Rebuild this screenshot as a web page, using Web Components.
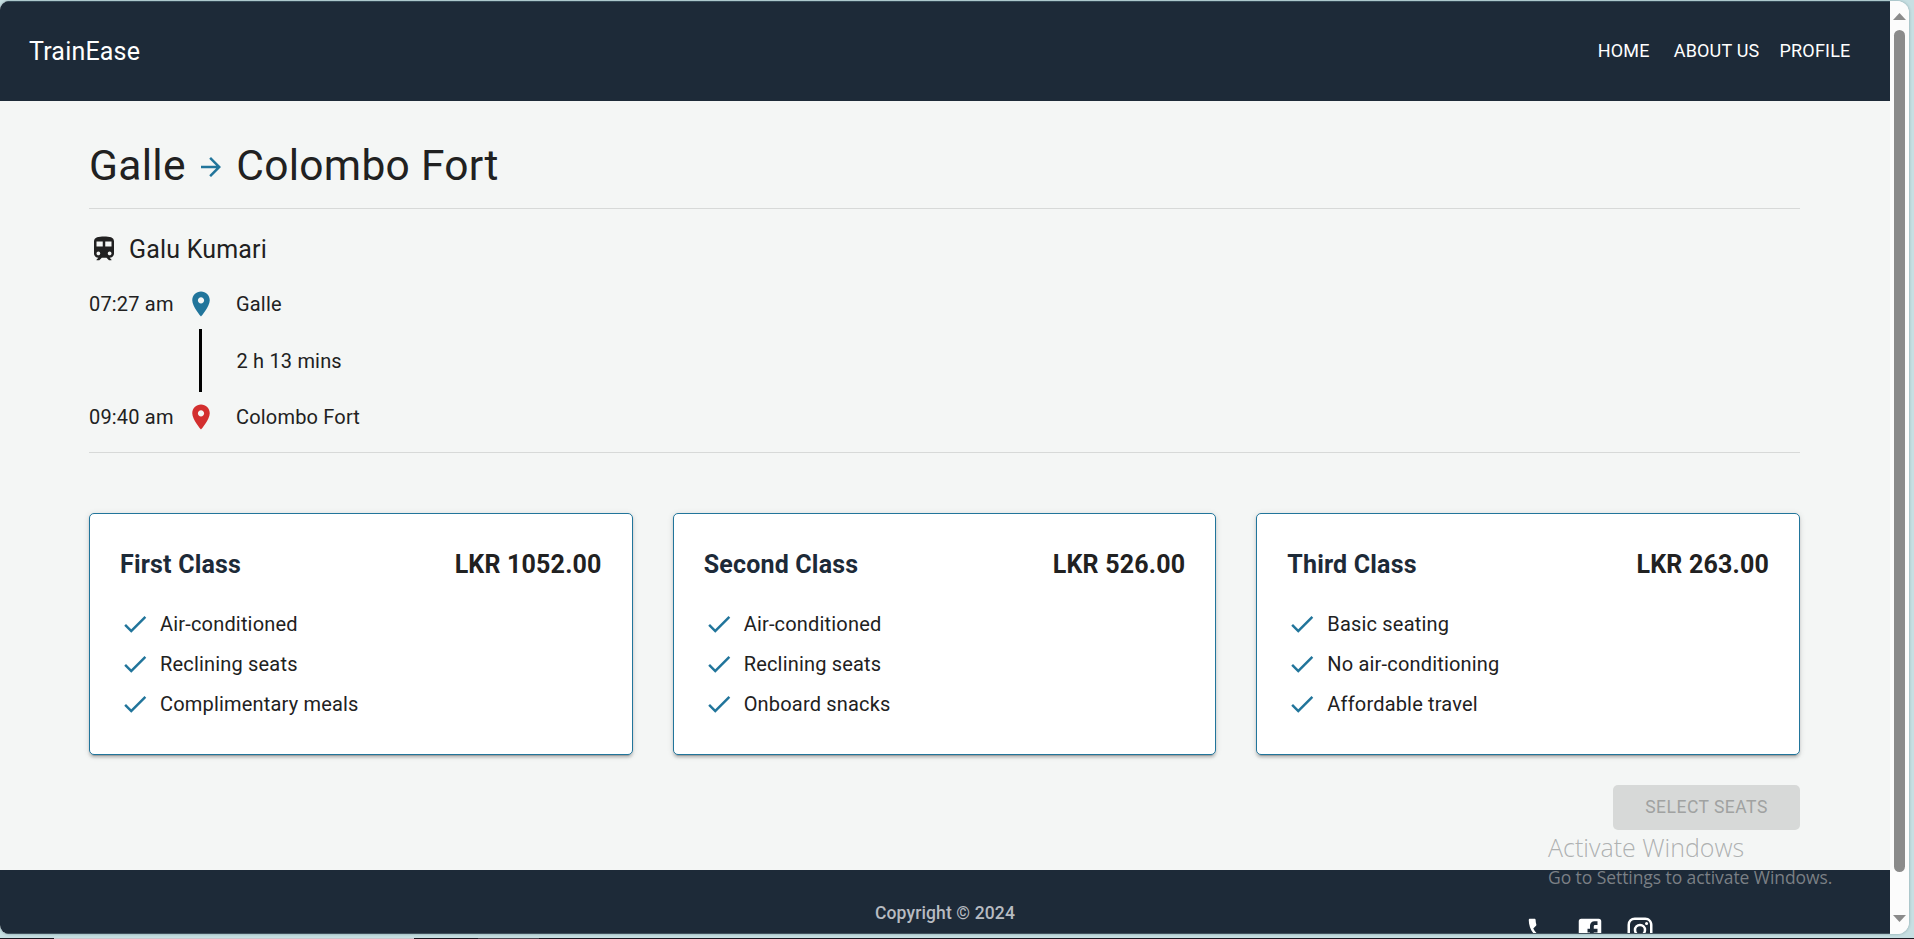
<!DOCTYPE html>
<html lang="en">
<head>
<meta charset="utf-8">
<title>TrainEase</title>
<style>
html,body{margin:0;height:939px;overflow:hidden}
body{background:#c7dfe2;font-family:Roboto,"Liberation Sans",sans-serif;color:#212121;font-size:20px;line-height:30px;letter-spacing:.009em}
</style>
</head>
<body>
<browser-window>
  <site-header slot="page"></site-header>
  <trip-page slot="page">
    <route-title from="Galle" to="Colombo Fort"></route-title>
    <trip-timeline></trip-timeline>
    <class-list>
      <class-card name="First Class" price="LKR 1052.00">
        <class-feature>Air-conditioned</class-feature><class-feature>Reclining seats</class-feature><class-feature>Complimentary meals</class-feature>
      </class-card>
      <class-card name="Second Class" price="LKR 526.00">
        <class-feature>Air-conditioned</class-feature><class-feature>Reclining seats</class-feature><class-feature>Onboard snacks</class-feature>
      </class-card>
      <class-card name="Third Class" price="LKR 263.00">
        <class-feature>Basic seating</class-feature><class-feature>No air-conditioning</class-feature><class-feature>Affordable travel</class-feature>
      </class-card>
    </class-list>
    <action-button>SELECT SEATS</action-button>
  </trip-page>
  <site-footer slot="page"></site-footer>
</browser-window>
<task-edge></task-edge>
<activation-note></activation-note>
<script>
const define = (name, render) => customElements.define(name, class extends HTMLElement {
  constructor() { super(); this.attachShadow({ mode: 'open' }); }
  connectedCallback() { this.shadowRoot.innerHTML = render(this); }
});
const paths = {
  arrow: 'm12 4-1.41 1.41L16.17 11H4v2h12.17l-5.58 5.59L12 20l8-8z',
  train: 'M12 2c-4 0-8 .5-8 4v9.5C4 17.43 5.57 19 7.5 19L6 20.5v.5h2.23l2-2H14l2 2h2v-.5L16.5 19c1.93 0 3.5-1.57 3.5-3.5V6c0-3.5-3.58-4-8-4M7.5 17c-.83 0-1.5-.67-1.5-1.5S6.67 14 7.5 14s1.5.67 1.5 1.5S8.33 17 7.5 17m3.5-7H6V6h5zm2 0V6h5v4zm3.5 7c-.83 0-1.5-.67-1.5-1.5s.67-1.5 1.5-1.5 1.5.67 1.5 1.5-.67 1.5-1.5 1.5',
  pin: 'M12 2C8.13 2 5 5.13 5 9c0 5.25 7 13 7 13s7-7.75 7-13c0-3.87-3.13-7-7-7m0 9.5c-1.38 0-2.5-1.12-2.5-2.5s1.12-2.5 2.5-2.5 2.5 1.12 2.5 2.5-1.12 2.5-2.5 2.5',
  check: 'M9 16.2 4.8 12l-1.4 1.4L9 19 21 7l-1.4-1.4z',
  phone: 'M6.62 10.79c1.44 2.83 3.76 5.14 6.59 6.59l2.2-2.2c.27-.27.67-.36 1.02-.24 1.12.37 2.33.57 3.57.57.55 0 1 .45 1 1V20c0 .55-.45 1-1 1-9.39 0-17-7.61-17-17 0-.55.45-1 1-1h3.5c.55 0 1 .45 1 1 0 1.25.2 2.45.57 3.57.11.35.03.74-.25 1.02z',
  facebook: 'M5 3h14a2 2 0 0 1 2 2v14a2 2 0 0 1-2 2h-4v-7h3v-3h-3V9a1 1 0 0 1 1-1h2V5h-2.5A3.5 3.5 0 0 0 12 8.5V11h-2v3h2v7H5a2 2 0 0 1-2-2V5a2 2 0 0 1 2-2',
  instagram: 'M7.8 2h8.4C19.4 2 22 4.6 22 7.8v8.4a5.8 5.8 0 0 1-5.8 5.8H7.8C4.6 22 2 19.4 2 16.2V7.8A5.8 5.8 0 0 1 7.8 2m-.2 2A3.6 3.6 0 0 0 4 7.6v8.8C4 18.39 5.61 20 7.6 20h8.8a3.6 3.6 0 0 0 3.6-3.6V7.6C20 5.61 18.39 4 16.4 4zm9.65 1.5a1.25 1.25 0 1 1 0 2.5 1.25 1.25 0 0 1 0-2.5M12 7a5 5 0 1 1 0 10 5 5 0 0 1 0-10m0 2a3 3 0 1 0 0 6 3 3 0 0 0 0-6'
};
define('ui-icon', el => `<style>:host{display:block;width:30px;height:30px;flex:none}svg{display:block}</style>
<svg width="30" height="30" viewBox="0 0 24 24" fill="currentColor"><path d="${paths[el.getAttribute('name')]}"/></svg>`);

define('browser-window', () => `<style>
:host{display:flex;height:933px;margin-top:1px;width:1909px;overflow:hidden;background:#fcfcfc;border-radius:9px 12px 12px 9px;box-shadow:0 0 3px rgba(40,80,90,.45)}
.page{width:1890px;height:933px;overflow:hidden;display:flex;flex-direction:column;background:#f4f6f5}
.bar{width:19px;display:flex;flex-direction:column;align-items:center;background:#fcfcfc;box-sizing:border-box;padding:12px 0 12px}
.thumb{width:11px;height:842px;border-radius:6px;background:#8b8b8b;margin:10px 0 0}
svg{display:block;flex:none}.down{margin-top:auto}
</style><div class="page"><slot name="page"></slot></div>
<div class="bar"><svg width="13" height="7"><path d="M6.5 0 13 7H0z" fill="#8b8b8b"/></svg><div class="thumb"></div><svg class="down" width="13" height="7"><path d="M0 0h13L6.500 7z" fill="#8b8b8b"/></svg></div>`);

define('site-header', () => `<style>
:host{display:flex;align-items:center;justify-content:space-between;height:100px;flex:none;background:#1d2a38;color:#fff;box-sizing:border-box;padding:0 39.5px 0 29px;border-top:1px solid #344a57}
.brand{font-size:25px;line-height:40px;letter-spacing:.0075em;padding-top:1px}
nav{display:flex;font-size:18px;font-weight:450;letter-spacing:.011em;padding-bottom:2px}
a:nth-child(2){margin:0 20px 0 24px}
</style><div class="brand">TrainEase</div><nav><a>HOME</a><a>ABOUT US</a><a>PROFILE</a></nav>`);

define('trip-page', () => `<style>:host{display:flex;flex-direction:column;height:769px;flex:none;box-sizing:border-box;padding:39px 90px 0 89px}</style><slot></slot>`);

define('route-title', el => `<style>
:host{display:flex;align-items:flex-start;height:68px;border-bottom:1px solid #d7d9d8;font-size:42.5px;line-height:52px;letter-spacing:.0068em}
ui-icon{color:#21759b;margin:12px 10px 0 10.500px}
</style><span>${el.getAttribute('from')}</span><ui-icon name="arrow"></ui-icon><span>${el.getAttribute('to')}</span>`);

define('trip-timeline', () => `<style>
:host{display:block;height:244px;box-sizing:border-box;border-bottom:1px solid #d7d9d8;padding-top:20px}
.name{display:flex;align-items:center;height:40px;gap:10px;font-size:25px;letter-spacing:.0075em}
.name ui-icon{margin-bottom:1px}
.name span{padding-top:2px}
.row{display:grid;grid-template-columns:97px 30px 1fr;align-items:center;height:30px}
.row span:last-child{padding-left:20px}
.first{margin-top:20px}
.row ui-icon{margin-top:-1px}
.mid{height:83px}
.mid span:last-child{padding-left:20.500px}
.line{width:3px;height:63px;background:#000;margin-left:13px}
</style>
<div class="name"><ui-icon name="train"></ui-icon><span>Galu Kumari</span></div>
<div class="row first"><span>07:27 am</span><ui-icon name="pin" style="color:#21759b"></ui-icon><span>Galle</span></div>
<div class="row mid"><span></span><div class="line"></div><span>2 h 13 mins</span></div>
<div class="row"><span>09:40 am</span><ui-icon name="pin" style="color:#d32f2f"></ui-icon><span>Colombo Fort</span></div>`);

define('class-list', () => `<style>:host{display:grid;grid-template-columns:repeat(3,1fr);gap:40px;margin-top:60px}</style><slot></slot>`);

define('class-card', el => `<style>
:host{display:block;box-sizing:border-box;height:242px;background:#fff;border:1px solid #21759b;border-radius:5px;padding:30px;box-shadow:0 4px 1px -3px rgba(0,0,0,.2),0 2.5px 2.5px 0 rgba(0,0,0,.14),0 1px 6px 0 rgba(0,0,0,.12)}
.head{display:flex;justify-content:space-between;height:39px;padding-top:1px;line-height:40px;font-size:25px;font-weight:700;letter-spacing:.0075em;margin-bottom:20px}
.name{color:#1d2a38}
</style><div class="head"><span class="name">${el.getAttribute('name')}</span><span>${el.getAttribute('price')}</span></div><slot></slot>`);

define('class-feature', () => `<style>:host{display:flex;align-items:center;gap:10px;height:40px}ui-icon{color:#21759b}</style><ui-icon name="check"></ui-icon><span><slot></slot></span>`);

define('action-button', () => `<style>
:host{display:flex;align-items:center;justify-content:center;align-self:flex-end;box-sizing:border-box;width:187px;height:45px;padding-bottom:1px;margin-top:30px;border-radius:5px;background:#d7d9d8;color:#a0a2a1;font-size:17.5px;letter-spacing:.02857em}
</style><slot></slot>`);

define('site-footer', () => `<style>
:host{display:grid;grid-template-columns:1fr auto 1fr;height:64px;box-sizing:border-box;border-bottom:1px solid #3f505b;overflow:hidden;background:#1d2a38;flex:none;align-items:start}
.copy{grid-column:2;margin-top:28px;color:#b7bbc1;font-size:17.5px;font-weight:500;letter-spacing:.00714em}
.social{display:flex;gap:20px;color:#fff;justify-self:end;padding:45px 235px 0 0}
</style><div class="copy">Copyright © 2024</div><div class="social"><ui-icon name="phone"></ui-icon><ui-icon name="facebook"></ui-icon><ui-icon name="instagram"></ui-icon></div>`);

define('task-edge', () => `<style>:host{display:block;height:1px;margin-top:4px;background:linear-gradient(90deg,#1b1721 54px,#c9c5cd 54px 414px,#1b1721 414px 478px,#4b4650 478px 539px,#1b1721 539px)}</style>`);

define('activation-note', () => `<style>
:host{position:absolute;left:1548px;top:830px;font-family:"Open Sans","Noto Sans",sans-serif;color:rgba(140,143,144,.68);letter-spacing:0;white-space:nowrap}
.big{font-size:25px;line-height:34px;font-weight:330}
.small{font-size:17.5px;line-height:24px;padding-top:1px;letter-spacing:-.07px;color:rgba(150,153,156,.78)}
</style><div class="big">Activate Windows</div><div class="small">Go to Settings to activate Windows.</div>`);
</script>
</body>
</html>
